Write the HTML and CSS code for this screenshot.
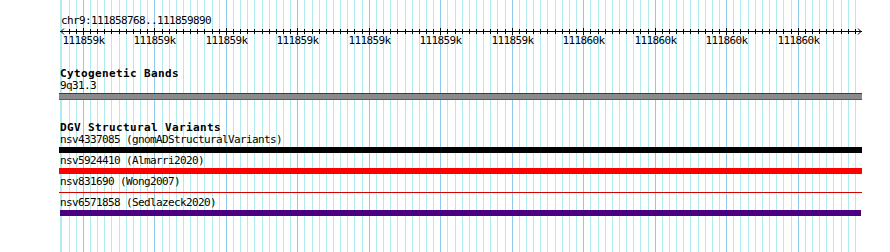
FILE: index.html
```html
<!DOCTYPE html>
<html lang="en">
<head>
    <meta charset="UTF-8">
    <title>Track View</title>
    <link rel="stylesheet" href="styles.css">
</head>
<body>

    <div class="view">
        <!-- Grid lines behind the tracks -->
        <svg class="grid" id="grid" width="803" height="252"></svg>

        <!-- Location and ruler -->
        <div class="overview">
            <div class="location">chr9:111858768..111859890</div>
            <svg class="ruler" id="ruler" width="803" height="20"></svg>
        </div>

        <!-- Cytogenetic bands track -->
        <div class="track track-bands">
            <div class="track-title">Cytogenetic Bands</div>
            <div class="feature">
                <div class="feature-label">9q31.3</div>
                <div class="bar bar-band"></div>
            </div>
        </div>

        <!-- DGV track -->
        <div class="track track-dgv">
            <div class="track-title">DGV Structural Variants</div>
            <div class="feature">
                <div class="feature-label">nsv4337085 (gnomADStructuralVariants)</div>
                <div class="bar bar-black"></div>
            </div>
            <div class="feature">
                <div class="feature-label">nsv5924410 (Almarri2020)</div>
                <div class="bar bar-red"></div>
            </div>
            <div class="feature">
                <div class="feature-label">nsv831690 (Wong2007)</div>
                <div class="bar bar-thin"></div>
            </div>
            <div class="feature">
                <div class="feature-label">nsv6571858 (Sedlazeck2020)</div>
                <div class="bar bar-purple"></div>
            </div>
        </div>
    </div>

    <script>
        // View region
        const start = 111858768;
        const end = 111859890;
        const widthPx = 802;
        const svgNS = 'http://www.w3.org/2000/svg';

        function toX(bp) {
            return 1 + (bp - start) * widthPx / (end - start);
        }

        function addEl(parent, name, attrs) {
            const el = document.createElementNS(svgNS, name);
            for (const key in attrs) {
                el.setAttribute(key, attrs[key]);
            }
            parent.appendChild(el);
            return el;
        }

        // Grid lines every 10bp, darker every 100bp
        const grid = document.getElementById('grid');
        addEl(grid, 'rect', { x: 1, y: 0, width: 1, height: 252, class: 'grid-minor' });
        for (let bp = Math.ceil(start / 10) * 10; bp <= end; bp += 10) {
            const x = Math.round(toX(bp));
            const major = bp % 100 === 0;
            addEl(grid, 'rect', { x: x, y: 0, width: 1, height: 252, class: major ? 'grid-major' : 'grid-minor' });
        }

        // Ruler with ticks and labels
        const ruler = document.getElementById('ruler');
        addEl(ruler, 'line', { x1: 1, y1: 4.5, x2: 803, y2: 4.5, class: 'ruler-line' });
        addEl(ruler, 'polyline', { points: '5,1.5 2,4.5 5,7.5', class: 'ruler-line' });
        addEl(ruler, 'polyline', { points: '799,1.5 802,4.5 799,7.5', class: 'ruler-line' });
        for (let bp = Math.ceil(start / 10) * 10; bp <= end; bp += 10) {
            const x = Math.round(toX(bp)) + 0.5;
            if (x < 5 || x > 799) continue;
            const major = bp % 100 === 0;
            addEl(ruler, 'line', { x1: x, y1: major ? 1 : 2, x2: x, y2: major ? 8 : 7, class: 'ruler-line' });
            if (major) {
                const label = addEl(ruler, 'text', { x: x, y: 17, class: 'ruler-label' });
                label.textContent = Math.round(bp / 1000) + 'k';
            }
        }
    </script>

</body>
</html>
```

FILE: styles.css
```css
/* Reset */
* {
    margin: 0;
    padding: 0;
    box-sizing: border-box;
}

body {
    background-color: #fff;
    color: #000;
    font-family: "DejaVu Sans Mono", "Liberation Mono", monospace;
    font-size: 11px;
    letter-spacing: -0.62px;
}

/* Main view */
.view {
    position: relative;
    margin-left: 59px;
    width: 803px;
    height: 252px;
}

.grid {
    position: absolute;
    top: 0;
    left: 0;
}

.grid-minor {
    fill: #b0ebef;
}

.grid-major {
    fill: #8ec8ea;
}

.overview,
.track {
    position: relative;
}

/* Location and ruler */
.overview {
    padding-top: 15px;
}

.location {
    line-height: 12px;
    padding-left: 2px;
}

.ruler {
    display: block;
}

.ruler-line {
    stroke: #000;
    stroke-width: 1;
    fill: none;
}

.ruler-label {
    font-family: "DejaVu Sans Mono", "Liberation Mono", monospace;
    font-size: 11px;
    letter-spacing: -0.62px;
    text-anchor: middle;
    fill: #000;
}

/* Tracks */
.track-bands {
    margin-top: 21px;
}

.track-dgv {
    margin-top: 22px;
}

.track-title {
    font-weight: bold;
    letter-spacing: 0.38px;
    line-height: 12px;
    padding-left: 1px;
}

.feature {
    margin-bottom: 2px;
}

.feature-label {
    line-height: 12px;
    padding-left: 1px;
    white-space: nowrap;
}

.bar {
    margin-top: 1px;
    height: 6px;
}

.bar-band {
    height: 7px;
    background-color: #8a8a8a;
    border-top: 1px solid #3c3c3c;
    border-bottom: 1px solid #5a5a5a;
}

.bar-black {
    background-color: #000;
}

.bar-red {
    background-color: #f00;
}

.bar-thin {
    display: flex;
    align-items: center;
}

.bar-thin::before {
    content: "";
    display: block;
    width: 100%;
    height: 1px;
    margin-top: 1px;
    background-color: #d40000;
}

.bar-purple {
    margin-left: 1px;
    margin-right: 1px;
    background-color: #4b0082;
}
```
